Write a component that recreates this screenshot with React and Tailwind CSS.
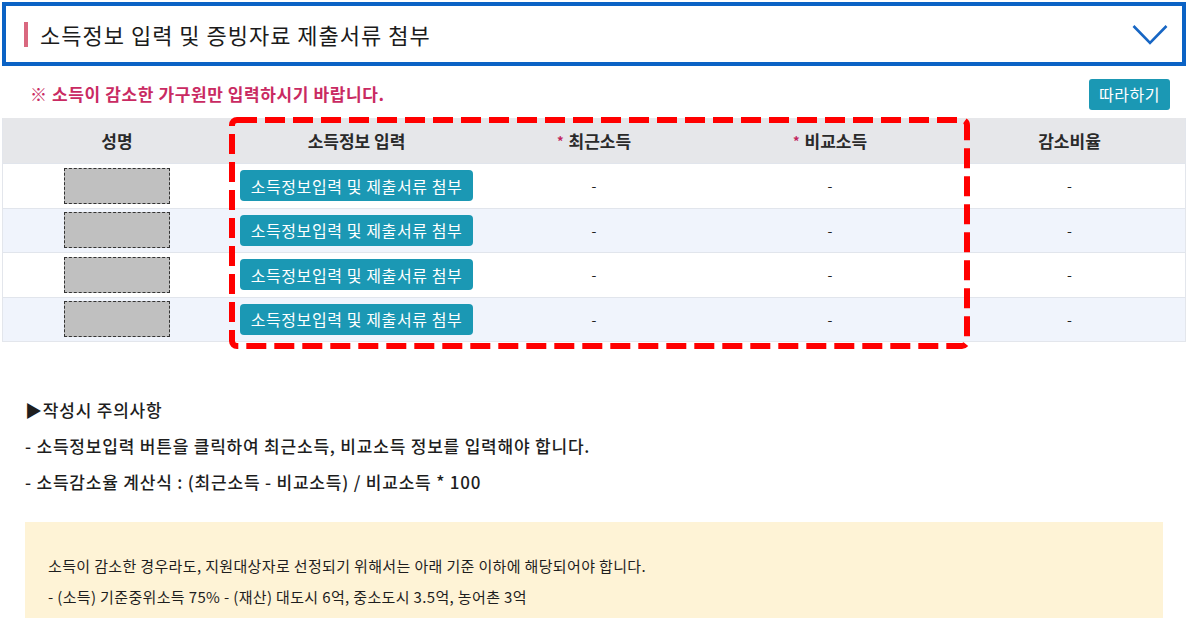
const FONT = { fontFamily: '"Noto Sans CJK KR", "Noto Sans", sans-serif' }

const rows = [0, 1, 2, 3]

const COLS = 'grid grid-cols-[228px_251px_224px_248px_1fr]'

function Chevron() {
  return (
    <svg width="36" height="22" viewBox="0 0 36 22" fill="none">
      <polyline points="1.5,2 18,19 34.5,2" stroke="#1766c4" strokeWidth="2.6" />
    </svg>
  )
}

function Star() {
  return <span className="relative top-[-2px] mr-[5px] text-[13px] text-[#c2255c]">*</span>
}

export default function App() {
  return (
    <div
      className="relative w-[1188px] h-[618px] overflow-hidden bg-white text-[#222]"
      style={FONT}
    >
      {/* header */}
      <div className="mx-[2px] mt-[2px] h-[64px] border-[4px] border-[#0b63c5] flex items-center pl-[18px] pr-[14px]">
        <div className="w-[4px] h-[25px] bg-[#d9687f]" />
        <div className="ml-[12px] flex-1 text-[22px] tracking-[1px] text-[#1b1b1b]">
          소득정보 입력 및 증빙자료 제출서류 첨부
        </div>
        <div className="pt-[2px]">
          <Chevron />
        </div>
      </div>

      {/* notice */}
      <div className="flex items-center justify-between pl-[30px] pr-[18px] mt-[12px] h-[32px]">
        <div className="text-[17px] font-bold tracking-[0.6px] text-[#c92a62]">
          ※ 소득이 감소한 가구원만 입력하시기 바랍니다.
        </div>
        <button className="w-[81px] h-[31px] rounded-[3px] bg-[#1b98b4] text-white text-[16px] tracking-[0.5px]">
          따라하기
        </button>
      </div>

      {/* table */}
      <div className="relative mx-[2px] mt-[8px] border-x border-b border-[#e3e6ec]">
        <div className={COLS + ' h-[45px] bg-[#e6e7ea] text-[17px] font-semibold text-[#2a2a2a] items-center text-center'}>
          <div>성명</div>
          <div>소득정보 입력</div>
          <div>
            <Star />
            최근소득
          </div>
          <div>
            <Star />
            비교소득
          </div>
          <div>감소비율</div>
        </div>
        {rows.map((r) => (
          <div
            key={r}
            className={
              COLS +
              ' h-[44.5px] items-center text-center text-[14px] border-t border-[#e1e5ec] ' +
              (r % 2 === 1 ? 'bg-[#f0f4fc]' : 'bg-white')
            }
          >
            <div className="flex justify-center">
              <div className="w-[106px] h-[36px] bg-[#c0c0c0] border border-dashed border-[#333]" />
            </div>
            <div className="flex justify-center">
              <button className="w-[233px] h-[31px] rounded-[4px] bg-[#1b98b4] text-white text-[16px] tracking-[0.6px]">
                소득정보입력 및 제출서류 첨부
              </button>
            </div>
            <div>-</div>
            <div>-</div>
            <div>-</div>
          </div>
        ))}

        {/* highlight box */}
        <svg
          className="absolute left-[226px] top-[-1px] pointer-events-none"
          width="742"
          height="233"
          viewBox="0 0 742 233"
        >
          <rect
            x="3"
            y="3"
            width="735"
            height="226"
            rx="5"
            fill="none"
            stroke="#ff0000"
            strokeWidth="6"
            strokeDasharray="20 8"
          />
        </svg>
      </div>

      {/* notes */}
      <div className="pl-[25px] mt-[54px] text-[17px] font-medium tracking-[0.8px] text-[#1e1e1e]">
        <div className="h-[28px] flex items-center">▶작성시 주의사항</div>
        <div className="mt-[8px] h-[28px] flex items-center">
          - 소득정보입력 버튼을 클릭하여 최근소득, 비교소득 정보를 입력해야 합니다.
        </div>
        <div className="mt-[8px] h-[28px] flex items-center">
          - 소득감소율 계산식 : (최근소득 - 비교소득) / 비교소득 * 100
        </div>
      </div>

      <div className="ml-[25px] mt-[26px] w-[1138px] h-[120px] bg-[#fef3d6] pl-[23px] pt-[32px] text-[15px] tracking-[0.35px] text-[#1e1e1e]">
        <div className="h-[24px] flex items-center">
          소득이 감소한 경우라도, 지원대상자로 선정되기 위해서는 아래 기준 이하에 해당되어야 합니다.
        </div>
        <div className="mt-[7px] h-[24px] flex items-center">
          - (소득) 기준중위소득 75% - (재산) 대도시 6억, 중소도시 3.5억, 농어촌 3억
        </div>
      </div>
    </div>
  )
}
